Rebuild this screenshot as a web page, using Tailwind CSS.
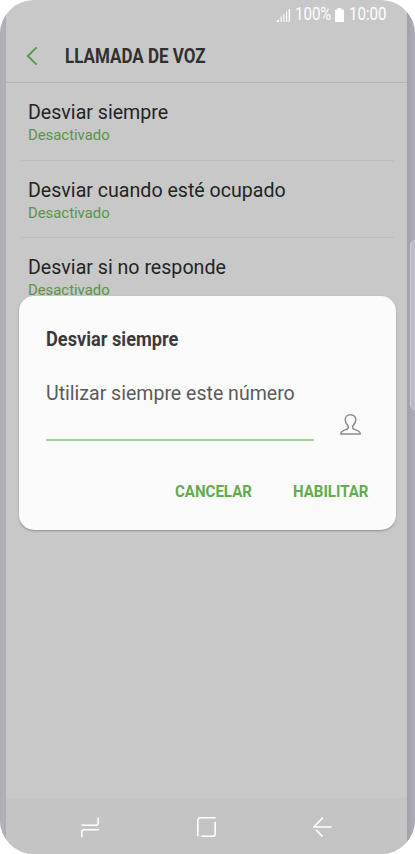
<!DOCTYPE html>
<html lang="es">
<head>
  <meta charset="utf-8">
  <title>Llamada de voz</title>
  <script src="https://cdn.jsdelivr.net/npm/@tailwindcss/browser@4"></script>
</head>
<body class="bg-white font-[Roboto,sans-serif]">
  <!-- Phone body -->
  <div class="relative flex w-[415px] h-[854px] rounded-[34px] overflow-hidden bg-[#c8c8c8]">
    <!-- Left edge -->
    <div class="w-1.5 shrink-0 bg-linear-to-r from-[#acadb4] via-[#b2b3b9] to-[#acacb0]"></div>

    <!-- Screen -->
    <div class="flex-1 flex flex-col min-w-0">
      <!-- Status bar -->
      <div class="h-[29px] shrink-0 flex items-center justify-end pr-[21px] text-white text-[17.5px] leading-[29px]">
        <svg class="w-[14px] h-[14px] mr-[5px]" viewBox="0 0 14 14" fill="#fff">
          <path d="M0 14L3 11V14ZM4.6 8.5H5.8V14H4.6ZM7.3 6H8.5V14H7.3ZM10 3.5H11.2V14H10ZM12.7 1H14V14H12.7Z"/>
        </svg>
        <span class="block w-[35px]"><span class="inline-block origin-left scale-x-[0.86]">100%</span></span>
        <svg class="w-[9px] h-[14px] mx-[5px]" viewBox="0 0 9 14" fill="#fff">
          <path d="M2.5 0H6.5V1.5H8Q9 1.5 9 2.5V14H0V2.5Q0 1.5 1 1.5H2.5Z"/>
        </svg>
        <span class="block w-[37px]"><span class="inline-block origin-left scale-x-[0.86]">10:00</span></span>
      </div>

      <!-- Header -->
      <div class="h-[54px] shrink-0 flex items-center pl-[20px] border-b border-[#b5b5b5]">
        <svg class="w-[12px] h-[20px] mr-[27px]" viewBox="0 0 12 20" fill="none" stroke="#579547" stroke-width="1.8">
          <path d="M10.6 1.3L1.8 10L10.6 18.7"/>
        </svg>
        <h1 class="text-[20px] font-bold text-[#303030] origin-left scale-x-[0.85] whitespace-nowrap">LLAMADA DE VOZ</h1>
      </div>

      <!-- Settings list -->
      <div class="flex-1 pl-[15px] pr-[13px]">
        <div class="h-[78px] pl-[7px] pt-[17px] border-b border-[#bdbdbd]">
          <p class="text-[20px] leading-6 text-[#242424] origin-left scale-x-[0.98]">Desviar siempre</p>
          <p class="text-[15px] leading-[22px] text-[#579547] origin-left scale-x-[0.99]">Desactivado</p>
        </div>
        <div class="h-[77px] pl-[7px] pt-[17px] border-b border-[#bdbdbd]">
          <p class="text-[20px] leading-6 text-[#242424] origin-left scale-x-[0.98]">Desviar cuando esté ocupado</p>
          <p class="text-[15px] leading-[22px] text-[#579547] origin-left scale-x-[0.99]">Desactivado</p>
        </div>
        <div class="h-[77px] pl-[7px] pt-[17px]">
          <p class="text-[20px] leading-6 text-[#242424] origin-left scale-x-[0.98]">Desviar si no responde</p>
          <p class="text-[15px] leading-[22px] text-[#579547] origin-left scale-x-[0.99]">Desactivado</p>
        </div>
      </div>

      <!-- Navigation bar -->
      <div class="h-14 shrink-0 flex items-center pl-[75px] pt-[2px] bg-[#c4c4c4]">
        <svg class="w-[18px] h-[21px]" viewBox="0 0 18 21" fill="none" stroke="#fff" stroke-width="1.6">
          <path d="M17.2 .5V6Q17.2 8.2 15 8.2H.5M.8 20.5V15Q.8 12.8 3 12.8H18"/>
        </svg>
        <svg class="w-[19px] h-[20px] ml-[98px]" viewBox="0 0 19 20" fill="none" stroke="#fff" stroke-width="1.6">
          <path d="M.8 19.2V3.5Q.8 .8 3.5 .8H18.7M18.2 4.8V16.5Q18.2 19.2 15.5 19.2H4.5"/>
        </svg>
        <svg class="w-[19px] h-[20px] ml-[97px]" viewBox="0 0 19 20" fill="none" stroke="#fff" stroke-width="1.6">
          <path d="M9.8 .6L.9 10H18.6M2.9 12.8L9.4 19.4"/>
        </svg>
      </div>
    </div>

    <!-- Right edge -->
    <div class="w-[8px] shrink-0 bg-linear-to-r from-[#a0a1a5] via-[#a8a9b1] to-[#abacb5]"></div>
    <div class="absolute left-[410px] top-[240px] w-[10px] h-[170px] rounded-[6px] bg-[#bbbcc6] border border-[#cacad0]"></div>

    <!-- Dialog -->
    <div class="absolute left-[19px] top-[296px] w-[377px] h-[234px] rounded-[15px] bg-[#fbfbfb] shadow-[0_1px_2px_rgba(0,0,0,0.3)] pl-[27px] pr-[27px] pt-[30px]">
      <h2 class="text-[20px] leading-[26px] font-bold text-[#3a3a3a] origin-left scale-x-[0.91] whitespace-nowrap">Desviar siempre</h2>
      <p class="mt-[28px] text-[20px] leading-[26px] text-[#5a5a5a] origin-left scale-x-[0.977] whitespace-nowrap">Utilizar siempre este número</p>
      <div class="flex">
        <div class="w-[268px] h-[35px] border-b-2 border-[#a0cf92]"></div>
        <svg class="w-[21px] h-[21px] ml-[26px] mt-[8px]" viewBox="0 0 21 21" fill="none" stroke="#8c8c8c" stroke-width="1.5" stroke-linejoin="round">
          <path d="M10.5 .8C7 .8 5.2 3 5.2 5.7C5.2 8.6 6.6 10 7.8 11.5C8.8 13 8.5 14.5 7 15.2C4 16.3 .9 16.8 .7 20H20.3C20.1 16.8 17 16.3 14 15.2C12.5 14.5 12.2 13 13.2 11.5C14.4 10 15.8 8.6 15.8 5.7C15.8 3 14 .8 10.5 .8Z"/>
        </svg>
      </div>
      <div class="flex justify-between mt-[38px] pl-[129px] text-[17px] leading-[24px] font-bold text-[#62ab4e]">
        <button class="w-[77px] text-left"><span class="inline-block origin-left scale-x-[0.885]">CANCELAR</span></button>
        <button class="w-[76px] text-left"><span class="inline-block origin-left scale-x-[0.885]">HABILITAR</span></button>
      </div>
    </div>
  </div>
</body>
</html>
